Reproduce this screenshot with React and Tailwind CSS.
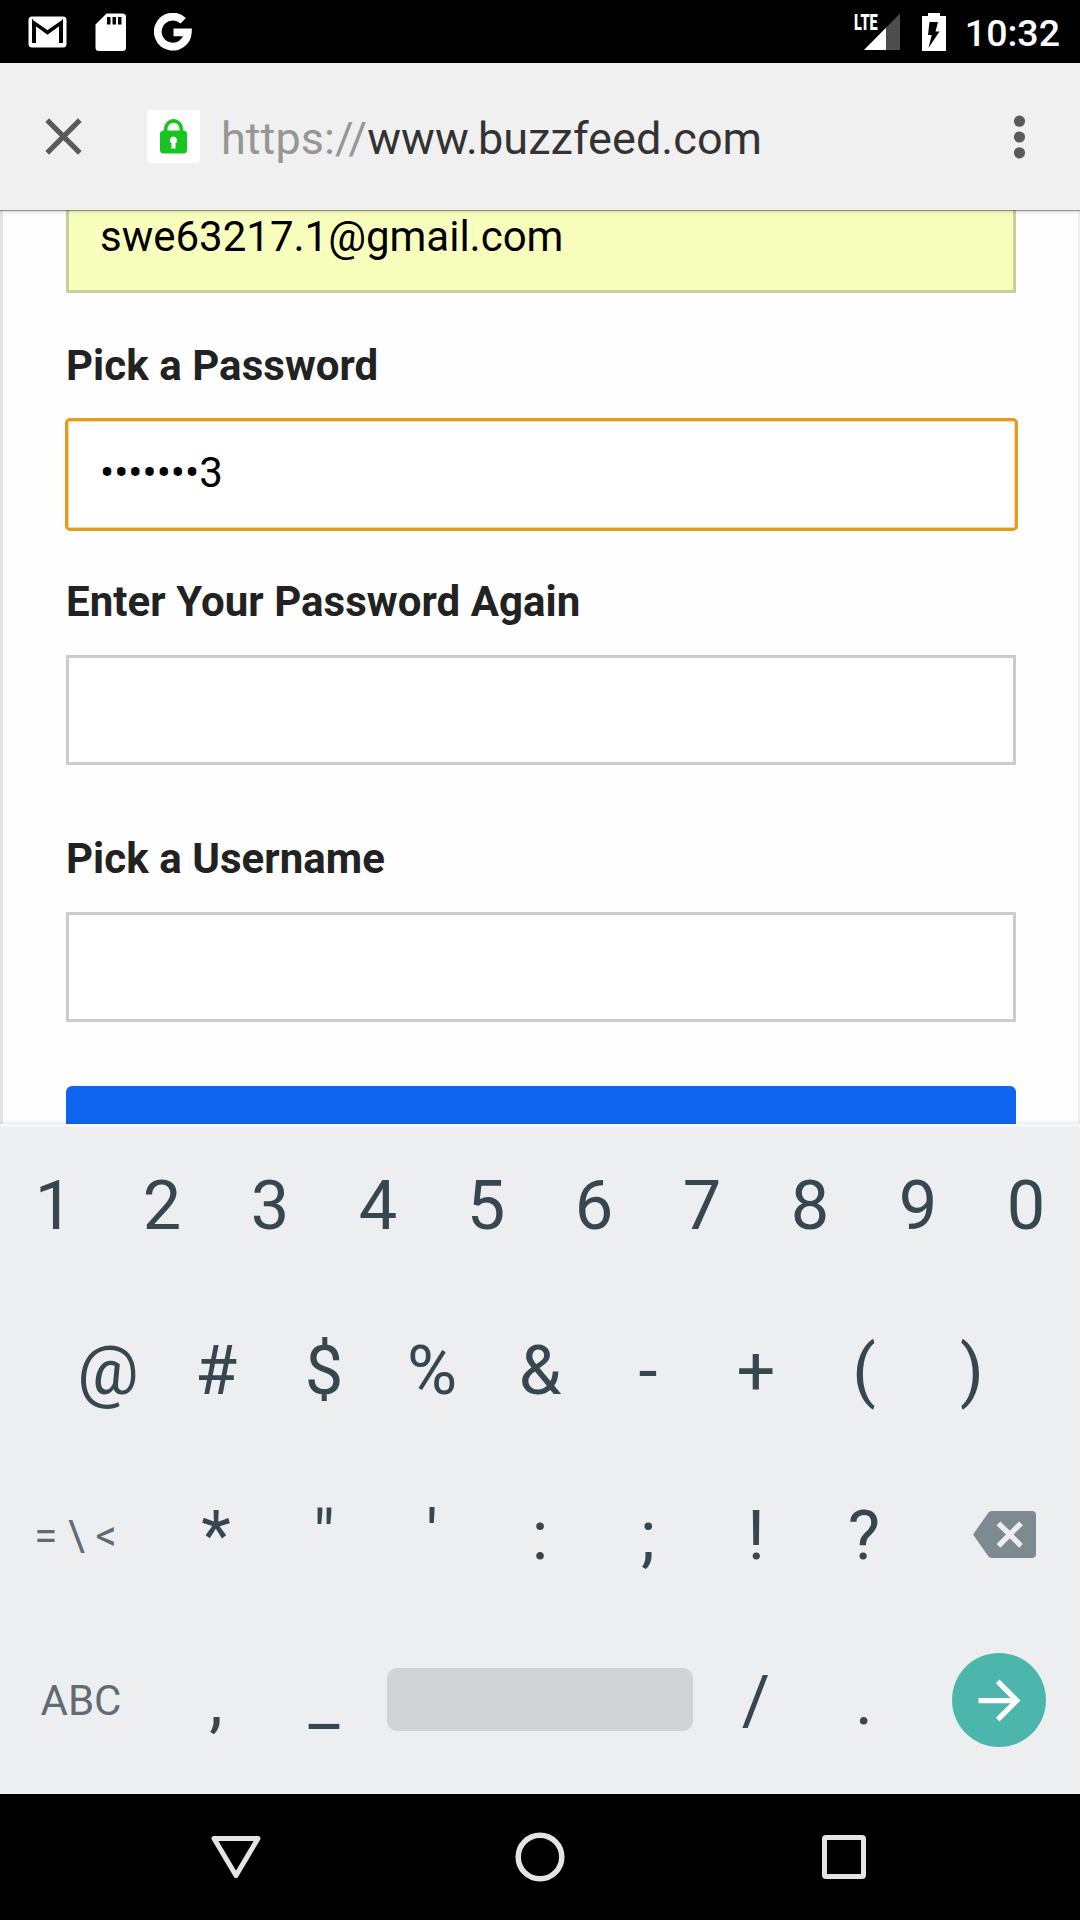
const numberRow = ['1', '2', '3', '4', '5', '6', '7', '8', '9', '0'];
const symbolRow = ['@', '#', '$', '%', '&', '-', '+', '(', ')'];
const punctuationRow = ['*', '"', "'", ':', ';', '!', '?'];

function StatusBar() {
  return (
    <header className="flex h-[63px] shrink-0 items-center bg-black text-white">
      <svg className="ml-7 h-[38px] w-[39px]" viewBox="0 0 39 38" aria-label="Mail">
        <rect x="0.5" y="3.5" width="38" height="31" rx="3.5" fill="#fff" />
        <path d="M6 30V9.5l13.5 9.8L33 9.5V30" fill="none" stroke="#000" strokeWidth="4" />
        <path d="M4 6.5h31l-15.500 10.500z" fill="#fff" />
      </svg>
      <svg className="ml-7 h-[38px] w-[32px]" viewBox="0 0 32 38" aria-label="SD card">
        <path
          fillRule="evenodd"
          d="M11.500 0.500H27.500a3.500 3.500 0 0 1 3.500 3.500V34.500a3.500 3.500 0 0 1-3.500 3.500H4a3.500 3.500 0 0 1-3.500-3.500V11.500zM12 4v7.500h3.500V4zM17.500 4v7.500h3.500V4zM23 4v7.500h3.500V4z"
          fill="#fff"
        />
      </svg>
      <svg className="ml-[27px] h-[38px] w-[38px]" viewBox="0 0 38 38" aria-label="Google">
        <path
          d="M29.200 7.800A15 15 0 1 0 33.800 19.300H19.500"
          fill="none"
          stroke="#fff"
          strokeWidth="7.800"
        />
      </svg>
      <div className="relative ml-auto h-[38px] w-[46px]">
        <svg className="h-[38px] w-[46px]" viewBox="0 0 46 38" aria-label="Signal">
          <path d="M45 0.500V37H9z" fill="#4d4d4d" />
          <path d="M31 14.800V37H9z" fill="#fff" />
          <path d="M0 0h25v17H0z" fill="#000" />
        </svg>
        <span className="absolute top-[-2px] -left-px origin-left scale-x-[0.66] text-[22px] leading-[24px] font-black">
          LTE
        </span>
      </div>
      <svg className="ml-[21px] h-[38px] w-[24px]" viewBox="0 0 24 38" aria-label="Battery charging">
        <path d="M6 0h12v3h6v35H0V3h6z" fill="#fff" />
        <path d="M7.500 9h8.500l-2.500 9.500h4L6.500 35l3.200-13H6z" fill="#000" />
      </svg>
      <span className="mt-0.5 mr-[20px] ml-[19px] text-[37.5px] leading-[44px] font-medium">10:32</span>
    </header>
  );
}

function AddressBar() {
  return (
    <div className="relative z-10 flex h-[147px] shrink-0 items-center bg-[#f0f0f0] shadow-[0_1px_1px_rgba(0,0,0,0.35),0_2px_5px_rgba(0,0,0,0.12)]">
      <svg className="ml-[45px] h-[37px] w-[37px]" viewBox="0 0 37 37" aria-label="Close">
        <path d="M2.200 2.200l32.600 32.600M34.800 2.200L2.200 34.800" stroke="#5a5a5a" strokeWidth="5.200" />
      </svg>
      <div className="ml-[65px] flex h-[53px] w-[53px] items-center justify-center rounded bg-white">
        <svg className="h-[35px] w-[27px]" viewBox="0 0 27 35" aria-label="Secure">
          <path d="M5.700 14V9.700a7.800 7.800 0 0 1 15.600 0V14" fill="none" stroke="#18c520" strokeWidth="3.600" />
          <rect x="0" y="11.500" width="27" height="23" rx="3.500" fill="#18c520" />
          <path d="M13.500 17.500a3.700 3.700 0 0 1 2 6.800V29.500h-4v-5.200a3.700 3.700 0 0 1 2-6.800z" fill="#fff" />
        </svg>
      </div>
      <div className="mt-[5px] ml-[21px] text-[45px] leading-[56px] tracking-[0.05px] text-[#333]">
        <span className="text-[#969696]">https://</span>www.buzzfeed.com
      </div>
      <svg className="mr-[54px] ml-auto h-[44px] w-[13px]" viewBox="0 0 13 44" fill="#5a5a5a" aria-label="More">
        <circle cx="6.500" cy="6.200" r="5.600" />
        <circle cx="6.500" cy="22" r="5.600" />
        <circle cx="6.500" cy="37.800" r="5.600" />
      </svg>
    </div>
  );
}

function Label({ children }) {
  return <div className="h-12 text-[42px] leading-[48px] font-bold tracking-[0.05px] text-[#222]">{children}</div>;
}

function SignupForm() {
  return (
    <main className="flex h-[914px] shrink-0 flex-col overflow-hidden border-r-2 border-l-[3px] border-r-[#eeeeee] border-l-[#e3e3e3] bg-[#fefefe] pr-[62px] pl-[63px]">
      <div className="-mt-[27px] flex h-[110px] shrink-0 items-center border-[3px] border-[#cbce9d] bg-[#f8ffbd] pb-[3px] pl-[31px] text-[42px] leading-[48px] text-black">
        swe63217.1@gmail.com
      </div>
      <div className="mt-[49px] shrink-0">
        <Label>Pick a Password</Label>
      </div>
      <div className="-mx-[1.5px] mt-[28px] flex h-[113px] shrink-0 items-center rounded-[5px] border-[3px] border-[#e19d1e] bg-white pb-1 pl-[32.5px] text-[42px] leading-[48px] text-black shadow-[inset_0_0_0_1px_rgba(225,157,30,0.4)]">
        •••••••3
      </div>
      <div className="mt-[47px] shrink-0">
        <Label>Enter Your Password Again</Label>
      </div>
      <div className="mt-[29px] h-[110px] shrink-0 border-[3px] border-[#cccccc] bg-white" />
      <div className="mt-[70px] shrink-0">
        <Label>Pick a Username</Label>
      </div>
      <div className="mt-[29px] h-[110px] shrink-0 border-[3px] border-[#cccccc] bg-white" />
      <div className="mt-[64px] h-[110px] shrink-0 rounded-md bg-[#0f65ef]" />
    </main>
  );
}

function Key({ children }) {
  return <div className="w-[108px] text-center">{children}</div>;
}

function Keyboard() {
  return (
    <section className="relative h-[670px] shrink-0 border-t-[3px] border-[#f5f6f7] bg-[#eceeef] text-[68.5px] leading-[80px] text-[#37474f] shadow-[0_-2px_4px_rgba(0,0,0,0.08)]">
      <div className="-mt-1 flex h-[165px] items-center">
        {numberRow.map((k) => (
          <Key key={k}>{k}</Key>
        ))}
      </div>
      <div className="flex h-[165px] items-center justify-center">
        {symbolRow.map((k) => (
          <Key key={k}>{k}</Key>
        ))}
      </div>
      <div className="flex h-[165px] items-center">
        <div className="w-[162px] pr-[11px] text-center text-[42px] text-[#5f6d73]">{'= \\ <'}</div>
        {punctuationRow.map((k) => (
          <Key key={k}>{k}</Key>
        ))}
        <svg className="mb-0.5 ml-[55px] h-[47px] w-[63px]" viewBox="0 0 63 47" aria-label="Backspace">
          <path
            d="M18.500 0H59a4 4 0 0 1 4 4v39a4 4 0 0 1-4 4H18.500q-2 0-3.200-1.700L0 23.500 15.300 1.700Q16.500 0 18.500 0z"
            fill="#7d8b91"
          />
          <path d="M25.500 12.300l22.500 22.500M48 12.300L25.500 34.800" stroke="#eceeef" strokeWidth="5.400" />
        </svg>
      </div>
      <div className="flex h-[165px] items-center">
        <div className="w-[162px] text-center text-[42px] text-[#5f6d73]">ABC</div>
        <Key>,</Key>
        <Key>_</Key>
        <div className="mx-[9px] mb-0.5 h-[63px] w-[306px] rounded-[10px] bg-[#d0d4d7]" />
        <Key>/</Key>
        <Key>.</Key>
        <div className="mb-px ml-[34px] flex h-[94px] w-[94px] items-center justify-center rounded-full bg-[#4db6ac]">
          <svg className="h-[63px] w-[63px]" viewBox="0 0 24 24" fill="#fff" aria-label="Next">
            <path d="M12 4l-1.410 1.410L16.170 11H4v2h12.170l-5.580 5.590L12 20l8-8z" />
          </svg>
        </div>
      </div>
    </section>
  );
}

function NavigationBar() {
  return (
    <nav className="flex h-[126px] shrink-0 items-center justify-center gap-[254px] bg-black">
      <svg className="h-[50px] w-[50px]" viewBox="0 0 50 50" fill="none" stroke="#e4e4e4" strokeWidth="5" aria-label="Back">
        <path d="M3 6.500h44L25 43.500z" strokeLinejoin="round" />
      </svg>
      <svg className="h-[50px] w-[50px]" viewBox="0 0 50 50" fill="none" stroke="#e4e4e4" strokeWidth="5.500" aria-label="Home">
        <circle cx="25" cy="25" r="21.800" />
      </svg>
      <svg className="h-[50px] w-[50px]" viewBox="0 0 50 50" fill="none" stroke="#e4e4e4" strokeWidth="5" aria-label="Recents">
        <rect x="5.500" y="5.500" width="39" height="39" rx="1.500" />
      </svg>
    </nav>
  );
}

export default function App() {
  return (
    <div className="flex h-[1920px] w-[1080px] flex-col overflow-hidden bg-white font-[Roboto,sans-serif]">
      <StatusBar />
      <AddressBar />
      <SignupForm />
      <Keyboard />
      <NavigationBar />
    </div>
  );
}
